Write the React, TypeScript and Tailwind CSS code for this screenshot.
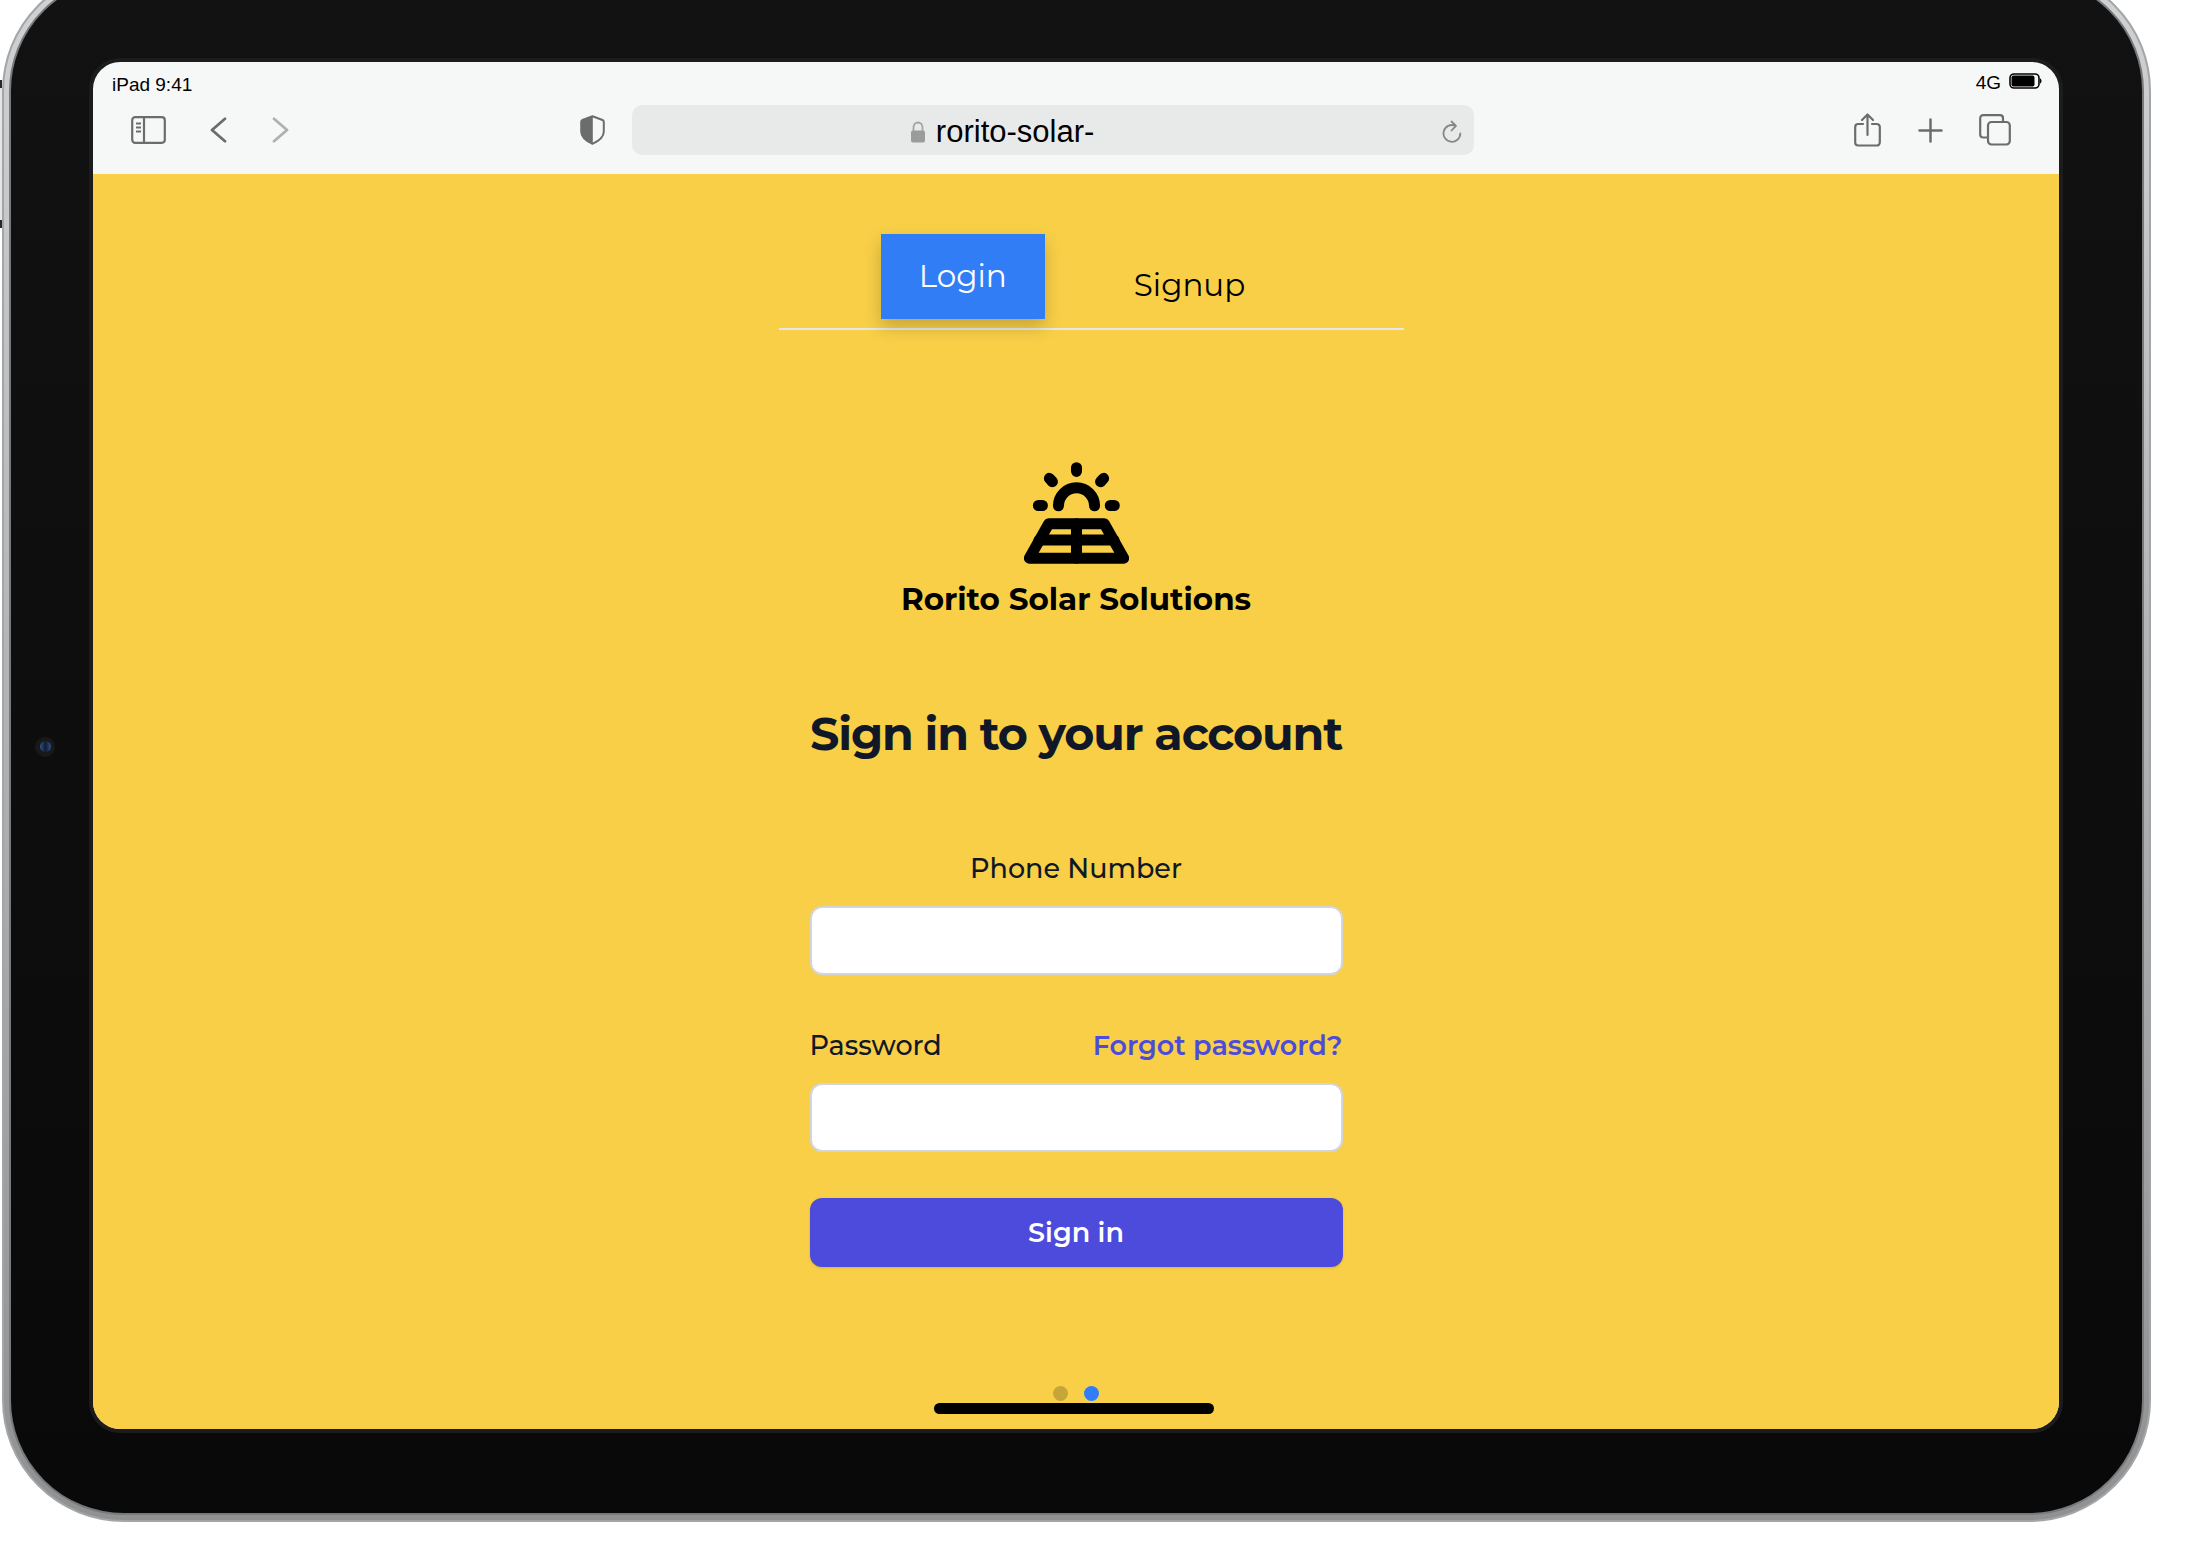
import type { ReactNode } from "react";

function IconButton({ label, className = "", children }: { label: string; className?: string; children: ReactNode }) {
  return (
    <button type="button" aria-label={label} className={`flex shrink-0 items-center justify-center ${className}`}>
      {children}
    </button>
  );
}

function StatusBar() {
  return (
    <div className="flex items-start justify-between pt-[11px] pr-[17px] pl-[19px] text-[19px] text-black">
      <span className="leading-6">iPad 9:41</span>
      <div className="flex items-start gap-2">
        <span className="leading-5">4G</span>
        <svg width="33" height="16" viewBox="0 0 33 16" fill="none" aria-hidden="true">
          <rect x="1" y="1" width="29" height="14" rx="4" stroke="#000" strokeWidth="1.6" />
          <rect x="2.5" y="2.5" width="23" height="11" rx="2" fill="#000" />
          <path d="M31 5.500c2 .6 2 4.400 0 5z" fill="#000" />
        </svg>
      </div>
    </div>
  );
}

function Toolbar() {
  return (
    <div className="grid grid-cols-[501fr_842fr_537fr] items-center pt-2 pr-12 pb-[19px] pl-[38px] text-[#6b6d6c]">
      <div className="flex items-center">
        <IconButton label="Show sidebar">
          <svg width="35" height="28" viewBox="0 0 35 28" fill="none" stroke="currentColor" strokeWidth="2.2">
            <rect x="1.2" y="1.200" width="32.600" height="25.600" rx="3" />
            <path d="M13 1.500v25" />
            <path d="M5 7.500h5M5 11.500h5M5 15.500h5" strokeWidth="1.800" />
          </svg>
        </IconButton>
        <IconButton label="Back" className="ml-11">
          <svg width="17" height="26" viewBox="0 0 17 26" fill="none" stroke="currentColor" strokeWidth="2.800" strokeLinecap="round" strokeLinejoin="round">
            <path d="M15 1.800L2 13l13 11.200" />
          </svg>
        </IconButton>
        <IconButton label="Forward" className="ml-[45px] opacity-50">
          <svg width="17" height="26" viewBox="0 0 17 26" fill="none" stroke="currentColor" strokeWidth="2.800" strokeLinecap="round" strokeLinejoin="round">
            <path d="M2 1.800L15 13 2 24.200" />
          </svg>
        </IconButton>
        <IconButton label="Privacy report" className="mr-[27px] ml-auto">
          <svg width="25" height="30" viewBox="0 0 25 30" fill="none">
            <path d="M12.500 1.200L2.500 5Q1.200 5.500 1.200 7v9.500c0 6 5 9.500 11.300 12.300 6.300-2.800 11.300-6.300 11.300-12.300V7q0-1.500-1.300-2z" stroke="currentColor" strokeWidth="2" strokeLinejoin="round" />
            <path d="M12.800 1L2.500 5Q1.200 5.500 1.200 7v9.500c0 6 5 9.500 11.600 12.300z" fill="currentColor" />
          </svg>
        </IconButton>
      </div>
      <div className="flex h-[50px] items-center rounded-[10px] bg-[#e8eaea] pt-1 pr-3 pl-[33%]">
        <div className="flex items-center gap-2.5">
          <svg width="16" height="22" viewBox="0 0 16 22" fill="none" aria-hidden="true">
            <path d="M3.500 11V6.500a4.500 5 0 0 1 9 0V11" stroke="#a2a3a3" strokeWidth="1.800" />
            <rect x="1" y="9.500" width="14" height="12" rx="2" fill="#9a9b9b" />
          </svg>
          <span className="text-[31px] leading-9 text-black">rorito-solar-</span>
        </div>
        <IconButton label="Reload" className="ml-auto text-[#858787]">
          <svg width="20" height="24" viewBox="0 0 20 24" fill="none" stroke="currentColor" strokeWidth="1.800" strokeLinecap="round" strokeLinejoin="round">
            <path d="M18.300 13.500A8.400 8.400 0 1 1 13 5.600" />
            <path d="M9.500 1.500l4.500 4.300-4.500 4.700" />
          </svg>
        </IconButton>
      </div>
      <div className="flex items-center justify-end">
        <IconButton label="Share">
          <svg width="27" height="34" viewBox="0 0 27 34" fill="none" stroke="currentColor" strokeWidth="2.200" strokeLinecap="round" strokeLinejoin="round">
            <path d="M9 11H4.200a3 3 0 0 0-3 3v15.500a3 3 0 0 0 3 3h18.600a3 3 0 0 0 3-3V14a3 3 0 0 0-3-3H18" />
            <path d="M13.500 22V1.500M8 7l5.500-5.500L19 7" />
          </svg>
        </IconButton>
        <IconButton label="New tab" className="ml-[37px]">
          <svg width="25" height="25" viewBox="0 0 25 25" fill="none" stroke="currentColor" strokeWidth="2.500" strokeLinecap="round">
            <path d="M12.500 1.500v22M1.500 12.500h22" />
          </svg>
        </IconButton>
        <IconButton label="Show tabs" className="ml-9">
          <svg width="32" height="32" viewBox="0 0 32 32" fill="none" stroke="currentColor" strokeWidth="2.200">
            <path d="M9 23.500H4.200a3 3 0 0 1-3-3V4.200a3 3 0 0 1 3-3h16.800a3 3 0 0 1 3 3V8" />
            <rect x="9" y="8" width="21.800" height="22.500" rx="3.500" />
          </svg>
        </IconButton>
      </div>
    </div>
  );
}

function SolarLogo() {
  return (
    <svg width="105" height="102" viewBox="430 67 314 305" fill="none" stroke="#000" strokeWidth="33" strokeLinecap="round" strokeLinejoin="round" aria-hidden="true">
      <path d="M587 84v11M506 116l9 10M668 116l-9 10M473 197h12M688 197h12" />
      <path d="M533 198a54 54 0 0 1 108 0" />
      <path d="M504 251.500h166L728 354.500H446z" />
      <path d="M587 251.500v103M475 300.500h224" />
    </svg>
  );
}

const fieldClass = "mt-[17px] h-[69px] w-full rounded-xl border-2 border-gray-300 bg-white px-5 text-[27px] text-gray-900";

function LoginPage() {
  return (
    <main className="flex flex-1 flex-col items-center bg-[#f8cf47] pt-[60px] font-['Montserrat','Inter',sans-serif]">
      <div className="pl-[30px]">
        <nav className="flex w-[625px] items-end justify-center gap-[51px] border-b-2 border-gray-200 pr-[18px] text-[31px] leading-[45px]">
          <a href="#login" className="mb-[9px] bg-[#307df6] px-[38px] py-5 text-white shadow-[0_8px_16px_rgba(0,0,0,0.2)]">Login</a>
          <a href="#signup" className="px-[38px] py-5 text-black">Signup</a>
        </nav>
      </div>

      <div className="mt-[132px] flex w-[533px] flex-col items-center">
        <SolarLogo />
        <p className="mt-[11px] text-[31px] leading-[48px] font-bold whitespace-nowrap text-black">Rorito Solar Solutions</p>
        <h1 className="mt-[79px] text-[46px] leading-[64px] font-bold tracking-tight whitespace-nowrap text-gray-900">Sign in to your account</h1>

        <form className="mt-[83px] flex w-full flex-col" onSubmit={(e) => e.preventDefault()}>
          <label htmlFor="phone" className="text-center text-[27px] leading-10 font-medium text-gray-900">Phone Number</label>
          <input id="phone" type="tel" className={fieldClass} />
          <div className="mt-[51px] flex items-center justify-between text-[27px] leading-10 whitespace-nowrap">
            <label htmlFor="password" className="font-medium text-gray-900">Password</label>
            <a href="#forgot" className="font-semibold text-[#4c4bdb]">Forgot password?</a>
          </div>
          <input id="password" type="password" className={fieldClass} />
          <button type="submit" className="mt-[46px] h-[69px] rounded-xl bg-[#4c4bdb] text-[27px] leading-10 font-semibold text-white shadow-sm">Sign in</button>
        </form>
      </div>

      <div className="mt-auto flex flex-col items-center pb-[15px]">
        <div className="flex gap-4">
          <span className="size-[15px] rounded-full bg-[#c6a639]" />
          <span className="size-[15px] rounded-full bg-[#307df6]" />
        </div>
        <div className="mt-0.5 mr-1 h-[11px] w-[280px] rounded-full bg-black" />
      </div>
    </main>
  );
}

export default function App() {
  return (
    <div className="relative flex min-h-screen flex-col overflow-hidden bg-white pr-[41px] pb-5 pl-0.5 font-['Liberation_Sans',Arial,sans-serif]">
      <div className="absolute top-20 left-0 h-[148px] w-0.5 border-y-8 border-[#25272b] bg-[#e3e5e6]" />
      <div className="-mt-[31px] flex flex-1 rounded-[122px] border-2 border-[#a3a5a6] bg-linear-to-b from-[#d0d2d4] to-[#8f9193] p-[5px]">
        <div className="relative flex flex-1 rounded-[115px] border-2 border-[#77797b] bg-linear-to-b from-[#121212] to-[#090909] py-20 pr-[79px] pl-[78px]">
          <div className="absolute top-[calc(50%-9px)] left-6 flex size-5 items-center justify-center rounded-full bg-[#191919]">
            <span className="size-[11px] rounded-full bg-linear-to-r from-[#2c5489] via-[#141c33] to-[#2c5489]" />
          </div>
          <div className="flex flex-1 rounded-[31px] border-4 border-[#1d1c1c]">
            <div className="flex flex-1 flex-col overflow-hidden rounded-[27px] bg-[#f6f8f7]">
              <header>
                <StatusBar />
                <Toolbar />
              </header>
              <LoginPage />
            </div>
          </div>
        </div>
      </div>
    </div>
  );
}
